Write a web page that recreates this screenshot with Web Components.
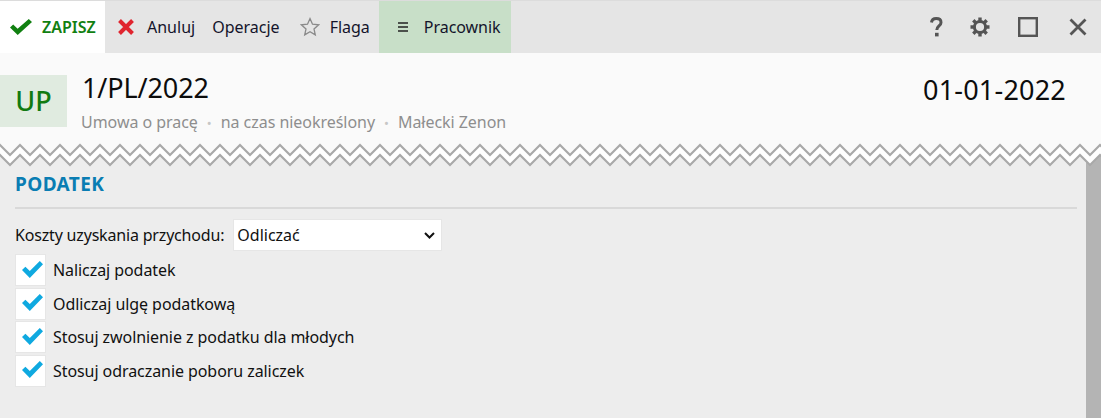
<!DOCTYPE html>
<html lang="pl">
<head>
<meta charset="utf-8">
<title>Umowa</title>
<style>
    html, body {
        margin: 0;
        height: 100%;
        overflow: hidden;
    }
    body {
        font-family: "Noto Sans", "Open Sans", sans-serif;
        font-size: 16px;
        color: #111;
        background: #ededed;
    }
    app-window {
        height: 418px;
    }
    .spacer {
        flex: 1;
    }
</style>
</head>
<body>
<app-window>
    <app-toolbar slot="toolbar">
        <tool-button kind="save" icon="check">ZAPISZ</tool-button>
        <tool-button icon="cross" style="padding: 0 8px 0 12px; gap: 12px;">Anuluj</tool-button>
        <tool-button style="padding: 0 11px 0 9px;">Operacje</tool-button>
        <tool-button icon="star" style="padding: 0 9px 0 9px; gap: 10px;">Flaga</tool-button>
        <tool-button kind="context" icon="menu">Pracownik</tool-button>
        <div class="spacer"></div>
        <window-icon icon="help"></window-icon>
        <window-icon icon="gear"></window-icon>
        <window-icon icon="square" style="margin-left: 4px;"></window-icon>
        <window-icon icon="close" style="margin-left: 6px;"></window-icon>
    </app-toolbar>
    <doc-header slot="header" badge="UP" number="1/PL/2022" date="01-01-2022">
        <span>Umowa o pracę</span>
        <span>na czas nieokreślony</span>
        <span>Małecki Zenon</span>
    </doc-header>
    <form-section title="PODATEK">
        <select-field label="Koszty uzyskania przychodu:" value="Odliczać"></select-field>
        <check-row>Naliczaj podatek</check-row>
        <check-row>Odliczaj ulgę podatkową</check-row>
        <check-row>Stosuj zwolnienie z podatku dla młodych</check-row>
        <check-row>Stosuj odraczanie poboru zaliczek</check-row>
    </form-section>
</app-window>

<script>
const ICONS = {
    check: '<svg width="22" height="16" viewBox="0 0 22 16"><path d="M0 8.6l3.2-3 4.4 4.1L18.8 0 22 3 7.7 16z" fill="#118011"/></svg>',
    cross: '<svg width="18" height="18" viewBox="0 0 18 18"><path d="M2.5 2.5l13 13M15.5 2.5l-13 13" stroke="#e0252f" stroke-width="4" fill="none"/></svg>',
    star: '<svg width="20" height="20" viewBox="0 0 20 20"><path d="M10 1.6l2.5 5.6 6.1.6-4.6 4.1 1.3 6-5.3-3.1-5.3 3.1 1.3-6-4.6-4.1 6.1-.6z" fill="none" stroke="#8a8a8a" stroke-width="1.3"/></svg>',
    menu: '<svg width="12" height="10" viewBox="0 0 12 10"><path d="M1 1h10M1 5h10M1 9h10" stroke="#222" stroke-width="1.3" fill="none"/></svg>',
    help: '<svg width="13" height="20" viewBox="0 0 13 20"><path d="M1.5 5.5C1.8 2.9 3.6 1.6 6.2 1.6c2.9 0 4.8 1.5 4.8 3.8 0 3.6-4.2 3.5-4.2 7.6" fill="none" stroke="#555" stroke-width="3"/><rect x="5" y="15.8" width="3.6" height="3.6" fill="#555"/></svg>',
    gear: '<svg width="20" height="20" viewBox="0 0 20 20"><circle cx="10" cy="10" r="5.6" fill="none" stroke="#555" stroke-width="3"/><path d="M10 .5v4M10 15.5v4M.5 10h4M15.5 10h4M3.3 3.3l2.8 2.8M13.9 13.9l2.8 2.8M16.7 3.3l-2.8 2.8M6.1 13.9l-2.8 2.8" stroke="#555" stroke-width="3.4" fill="none"/></svg>',
    square: '<svg width="20" height="20" viewBox="0 0 20 20"><rect x="1.2" y="1.2" width="17.6" height="17.6" fill="none" stroke="#555" stroke-width="2.4"/></svg>',
    close: '<svg width="18" height="18" viewBox="0 0 18 18"><path d="M1.5 1.5l15 15M16.5 1.5l-15 15" stroke="#555" stroke-width="2.8" fill="none"/></svg>'
};

class AppWindow extends HTMLElement {
    constructor() {
        super();
        this.attachShadow({mode: 'open'});
        this.shadowRoot.innerHTML = `
            <style>
                :host {
                    display: flex;
                    flex-direction: column;
                    width: 1101px;
                    overflow: hidden;
                }
                #body {
                    flex: 1;
                    display: flex;
                    min-height: 0;
                }
                #content {
                    flex: 1;
                    min-width: 0;
                }
                #scrollbar {
                    width: 15px;
                    background: #b4b4b4;
                }
            </style>
            <slot name="toolbar"></slot>
            <slot name="header"></slot>
            <div id="body">
                <div id="content"><slot></slot></div>
                <div id="scrollbar"></div>
            </div>
        `;
    }
}

class AppToolbar extends HTMLElement {
    constructor() {
        super();
        this.attachShadow({mode: 'open'});
        this.shadowRoot.innerHTML = `
            <style>
                :host {
                    display: flex;
                    height: 52px;
                    background: #e5e5e5;
                    border-top: 1px solid #dcdcdc;
                    padding-right: 1px;
                }
            </style>
            <slot></slot>
        `;
    }
}

class ToolButton extends HTMLElement {
    constructor() {
        super();
        this.attachShadow({mode: 'open'});
        const icon = ICONS[this.getAttribute('icon')] || '';
        this.shadowRoot.innerHTML = `
            <style>
                :host {
                    display: flex;
                    align-items: center;
                    gap: 10px;
                    padding: 0 9px;
                    color: #14142b;
                    white-space: nowrap;
                }
                :host([kind="save"]) {
                    box-sizing: border-box;
                    width: 105px;
                    background: #fff;
                    color: #118011;
                    font-weight: 600;
                    padding: 0 0 0 10px;
                }
                :host([kind="context"]) {
                    box-sizing: border-box;
                    width: 132px;
                    background: #c8dfc8;
                    padding: 0 0 0 18px;
                    gap: 15px;
                    letter-spacing: -0.05px;
                }
                svg {
                    display: block;
                }
            </style>
            ${icon}
            <slot></slot>
        `;
    }
}

class WindowIcon extends HTMLElement {
    constructor() {
        super();
        this.attachShadow({mode: 'open'});
        this.shadowRoot.innerHTML = `
            <style>
                :host {
                    display: flex;
                    align-items: center;
                    justify-content: center;
                    width: 44px;
                }
            </style>
            ${ICONS[this.getAttribute('icon')]}
        `;
    }
}

class DocHeader extends HTMLElement {
    constructor() {
        super();
        this.attachShadow({mode: 'open'});
        this.shadowRoot.innerHTML = `
            <style>
                :host {
                    display: block;
                    position: relative;
                    background: #fafafa;
                    height: 90px;
                    z-index: 1;
                }
                #top {
                    display: flex;
                    padding: 22px 35px 0 0;
                }
                #badge {
                    width: 67px;
                    height: 50px;
                    padding-bottom: 2px;
                    display: flex;
                    align-items: center;
                    justify-content: center;
                    background: #e0ebe0;
                    color: #117a11;
                    font-size: 27px;
                    font-weight: 500;
                }
                #main {
                    flex: 1;
                    margin-left: 15px;
                    margin-top: -7px;
                }
                #number, #date {
                    font-size: 27px;
                    line-height: 40px;
                    color: #0c0c0c;
                }
                #number {
                    letter-spacing: -0.1px;
                }
                #date {
                    margin-top: -5px;
                    letter-spacing: 0.2px;
                }
                #meta {
                    display: flex;
                    color: #8e8e8e;
                    line-height: 24px;
                    margin: 2px 0 0 -1px;
                    letter-spacing: -0.04px;
                }
                ::slotted(span:not(:first-child))::before {
                    content: "•";
                    color: #c6c6c6;
                    margin: 0 9px;
                    font-size: 13px;
                }
                #edge {
                    position: absolute;
                    left: 0;
                    top: 100%;
                    display: block;
                }
            </style>
            <div id="top">
                <div id="badge">${this.getAttribute('badge')}</div>
                <div id="main">
                    <div id="number">${this.getAttribute('number')}</div>
                    <div id="meta"><slot></slot></div>
                </div>
                <div id="date">${this.getAttribute('date')}</div>
            </div>
            <svg id="edge" width="1101" height="24">
                <defs>
                    <pattern id="zig" width="20" height="24" patternUnits="userSpaceOnUse">
                        <path d="M0 0H20V2L10 12 0 2z" fill="#fafafa"/>
                        <path d="M0 2L10 12 20 2V12L10 22 0 12z" fill="#fff"/>
                        <path d="M-2 0L0 2 10 12 20 2 22 0M-2 10L0 12 10 22 20 12 22 10" fill="none" stroke="#a9a9a9" stroke-width="2.2"/>
                    </pattern>
                </defs>
                <rect width="1101" height="24" fill="url(#zig)"/>
            </svg>
        `;
    }
}

class FormSection extends HTMLElement {
    constructor() {
        super();
        this.attachShadow({mode: 'open'});
        this.shadowRoot.innerHTML = `
            <style>
                :host {
                    display: block;
                    padding: 29px 9px 0 15px;
                }
                h2 {
                    margin: 0;
                    font-size: 19px;
                    line-height: 24px;
                    font-weight: 700;
                    letter-spacing: 0.4px;
                    color: #0a7db3;
                }
                hr {
                    border: 0;
                    border-top: 2px solid #d9d9d9;
                    margin: 11px 0 10px;
                }
            </style>
            <h2>${this.getAttribute('title')}</h2>
            <hr>
            <div id="rows"><slot></slot></div>
        `;
    }
}

class SelectField extends HTMLElement {
    constructor() {
        super();
        this.attachShadow({mode: 'open'});
        this.shadowRoot.innerHTML = `
            <style>
                :host {
                    display: flex;
                    align-items: center;
                    gap: 9px;
                    height: 32px;
                    margin: 0 0 3px 0;
                }
                #label {
                    letter-spacing: -0.18px;
                }
                #wrap {
                    position: relative;
                    display: block;
                    width: 209px;
                    height: 32px;
                }
                select {
                    appearance: none;
                    width: 100%;
                    height: 100%;
                    box-sizing: border-box;
                    border: 1px solid #e6e6e6;
                    border-radius: 0;
                    background: #fff;
                    font: inherit;
                    color: #111;
                    padding: 0 24px 0 3px;
                }
                svg {
                    position: absolute;
                    right: 7px;
                    top: 13px;
                    pointer-events: none;
                }
            </style>
            <span id="label">${this.getAttribute('label')}</span>
            <span id="wrap">
                <select><option>${this.getAttribute('value')}</option></select>
                <svg width="11" height="7" viewBox="0 0 11 7"><path d="M1 1l4.5 4.5L10 1" fill="none" stroke="#111" stroke-width="2"/></svg>
            </span>
        `;
    }
}

class CheckRow extends HTMLElement {
    constructor() {
        super();
        this.attachShadow({mode: 'open'});
        this.shadowRoot.innerHTML = `
            <style>
                :host {
                    display: flex;
                    align-items: center;
                    gap: 7px;
                    height: 32px;
                    margin-bottom: 1.5px;
                    letter-spacing: -0.07px;
                }
                #box {
                    width: 31px;
                    height: 32px;
                    box-sizing: border-box;
                    border: 1px solid #e6e6e6;
                    background: #fff;
                    display: flex;
                    align-items: center;
                    justify-content: center;
                }
                svg {
                    margin: -2px 0 0 3px;
                }
            </style>
            <span id="box">
                <svg width="21" height="17" viewBox="0 0 21 17"><path d="M0 9l3.4-3.2 4.4 4.2L17.8 0 21 3.2 7.8 17z" fill="#0fa9e0"/></svg>
            </span>
            <slot></slot>
        `;
    }
}

customElements.define('app-window', AppWindow);
customElements.define('app-toolbar', AppToolbar);
customElements.define('tool-button', ToolButton);
customElements.define('window-icon', WindowIcon);
customElements.define('doc-header', DocHeader);
customElements.define('form-section', FormSection);
customElements.define('select-field', SelectField);
customElements.define('check-row', CheckRow);
</script>
</body>
</html>
